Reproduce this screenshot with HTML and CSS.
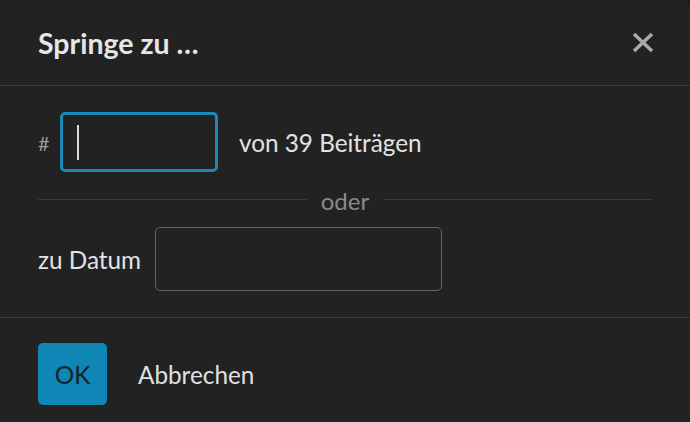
FILE: index.html
```html
<!DOCTYPE html>
<html lang="de">
<head>
<meta charset="utf-8">
<link rel="stylesheet" href="styles.css">
</head>
<body>
<div class="modal">
  <div class="header">
    <h1 class="title">Springe zu …</h1>
    <svg class="close" viewBox="0 0 22 21" width="22" height="21"><path d="M2 2 L20 19 M20 2 L2 19" stroke="#a9a9a9" stroke-width="3.6" stroke-linecap="butt" fill="none"/></svg>
  </div>
  <div class="body">
    <div class="row">
      <span class="hash">#</span>
      <div class="field focused"><span class="caret"></span></div>
      <span class="label after">von 39 Beiträgen</span>
    </div>
    <div class="divider"><span class="line"></span><span class="or">oder</span><span class="line"></span></div>
    <div class="row">
      <span class="label">zu Datum</span>
      <div class="field date"></div>
    </div>
  </div>
  <div class="footer">
    <button class="btn-primary">OK</button>
    <button class="btn-flat">Abbrechen</button>
  </div>
</div>
</body>
</html>
```
FILE: styles.css
```css
html { background: #1a1a1a; }
body {
  margin: 0;
  font-family: "Lato", "Noto Sans", sans-serif;
  color: #e2e2e2;
}
.modal {
  width: 690px;
  height: 422px;
  background: #222222;
  border-top-right-radius: 6px;
  display: flex;
  flex-direction: column;
  overflow: hidden;
}
.header {
  flex-shrink: 0;
  height: 86px;
  box-sizing: border-box;
  border-bottom: 1px solid #3a3a3a;
  display: flex;
  align-items: center;
  justify-content: space-between;
  padding: 0 36px 0 38px;
}
.title {
  margin: 0;
  font-size: 28.5px;
  font-weight: 700;
  color: #e6e6e6;
  margin-top: 1px;
}
.close { display: block; margin-top: -1px; }
.body {
  flex-shrink: 0;
  padding: 26px 38px;
  border-bottom: 1px solid #3a3a3a;
}
.row {
  display: flex;
  align-items: center;
}
.hash {
  color: #9a9a9a;
  font-size: 20px;
  width: 22px;
  margin-top: 2px;
}
.field {
  box-sizing: border-box;
  background: #222;
  border-radius: 5px;
  display: flex;
  align-items: center;
}
.field.focused {
  width: 158px;
  height: 60px;
  border: 3px solid #1c88b4;
  padding-left: 14px;
}
.caret {
  width: 2px;
  height: 35px;
  background: #d8d8d8;
}
.field.date {
  width: 287px;
  height: 64px;
  border: 1px solid #636363;
  margin-left: 14px;
}
.label {
  font-size: 24.3px;
  color: #e2e2e2;
}
.label.after { margin-left: 21px; }
.divider {
  height: 55px;
  display: flex;
  align-items: center;
  gap: 14px;
}
.line {
  flex: 1;
  height: 1px;
  background: #3a3a3a;
}
.or {
  font-size: 24px;
  color: #8a8a8a;
  margin-top: 2px;
}
.footer {
  flex-shrink: 0;
  padding: 25px 38px 0;
  display: flex;
  align-items: center;
  gap: 31px;
}
button {
  font-family: inherit;
  font-size: 24.3px;
  border: 0;
  cursor: pointer;
}
.btn-primary {
  width: 69px;
  height: 62px;
  background: #1086b7;
  color: #16222a;
  border-radius: 5px;
  padding: 0;
}
.btn-flat {
  background: none;
  color: #e0e0e0;
  padding: 0;
}
```
